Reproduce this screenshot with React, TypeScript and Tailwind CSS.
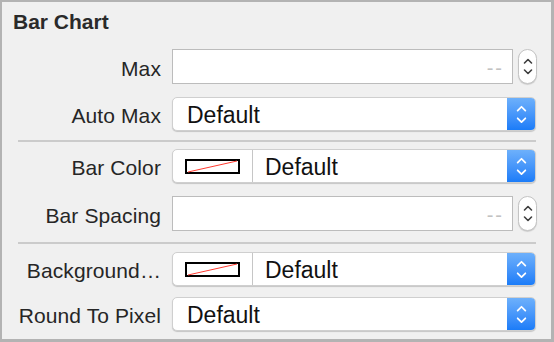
import React from "react";

const font = { fontFamily: '"Liberation Sans", Arial, sans-serif' };

function Label({ children }: { children: React.ReactNode }) {
  return (
    <div className="w-[159px] shrink-0 text-right text-[21px] leading-[24px] tracking-[0.1px] text-[#262626] mt-[4px] whitespace-nowrap">
      {children}
    </div>
  );
}

function Chevrons({ color, size }: { color: string; size: number }) {
  return (
    <svg width={size} height={size * 1.9} viewBox="0 0 10 19" fill="none">
      <path d="M1.5 6 L5 2.5 L8.5 6" stroke={color} strokeWidth="1.6" strokeLinecap="round" strokeLinejoin="round" />
      <path d="M1.5 13 L5 16.5 L8.5 13" stroke={color} strokeWidth="1.6" strokeLinecap="round" strokeLinejoin="round" />
    </svg>
  );
}

function NumberField() {
  return (
    <div className="flex items-center gap-[5px] ml-[11px]">
      <div className="w-[341px] h-[35px] bg-white border border-[#bcbcbc] flex items-center justify-end pr-[8px]">
        <span className="text-[20px] leading-[24px] text-[#c2c2c2] tracking-[2px] mt-[2px]">--</span>
      </div>
      <div className="w-[19px] h-[35px] rounded-full bg-white border border-[#c4c4c4] shadow-[0_1px_1px_rgba(0,0,0,0.15)] flex items-center justify-center">
        <Chevrons color="#3e3e3e" size={10} />
      </div>
    </div>
  );
}

function Popup({ children }: { children: React.ReactNode }) {
  return (
    <div className="ml-[11px] w-[364px] h-[34px] rounded-[5px] bg-white border border-[#cfcfcf] shadow-[0_1px_1px_rgba(0,0,0,0.18)] flex items-stretch overflow-hidden">
      <div className="flex-1 flex items-center min-w-0">{children}</div>
      <div className="w-[28px] bg-gradient-to-b from-[#6db0fb] to-[#1a7cf8] flex items-center justify-center">
        <Chevrons color="#ffffff" size={11} />
      </div>
    </div>
  );
}

function DefaultText({ className = "" }: { className?: string }) {
  return (
    <span className={`text-[23px] leading-[26px] text-[#111] mt-[2px] ${className}`}>Default</span>
  );
}

function ColorPopup() {
  return (
    <Popup>
      <div className="w-[80px] h-full flex items-center justify-center border-r border-[#c6c6c6]">
        <svg width="55" height="15" viewBox="0 0 55 15">
          <rect x="1" y="1" width="53" height="13" fill="#fff" stroke="#000" strokeWidth="2" />
          <line x1="3" y1="13" x2="52" y2="2" stroke="#ff3b30" strokeWidth="1" />
        </svg>
      </div>
      <DefaultText className="ml-[12px]" />
    </Popup>
  );
}

function Separator({ className }: { className: string }) {
  return <div className={`ml-[16px] w-[518px] h-[2px] bg-[#cbcbcb] ${className}`} />;
}

export default function App() {
  return (
    <div
      style={font}
      className="w-[554px] h-[342px] bg-[#f0f0f0] border-t-2 border-l-2 border-r-[3px] border-b-[3px] border-[#b3b3b3] overflow-hidden"
    >
      <div className="ml-[11px] mt-[8px] h-[24px] text-[21px] leading-[24px] font-bold text-[#2a2a2a]">
        Bar Chart
      </div>

      <div className="flex items-center mt-[15px]">
        <Label>Max</Label>
        <NumberField />
      </div>

      <div className="flex items-center mt-[13px]">
        <Label>Auto Max</Label>
        <Popup>
          <DefaultText className="ml-[14px]" />
        </Popup>
      </div>

      <Separator className="mt-[9px]" />

      <div className="flex items-center mt-[7px]">
        <Label>Bar Color</Label>
        <ColorPopup />
      </div>

      <div className="flex items-center mt-[13px]">
        <Label>Bar Spacing</Label>
        <NumberField />
      </div>

      <Separator className="mt-[11px]" />

      <div className="flex items-center mt-[8px]">
        <Label>Background…</Label>
        <ColorPopup />
      </div>

      <div className="flex items-center mt-[11px]">
        <Label>Round To Pixel</Label>
        <Popup>
          <DefaultText className="ml-[14px]" />
        </Popup>
      </div>
    </div>
  );
}
